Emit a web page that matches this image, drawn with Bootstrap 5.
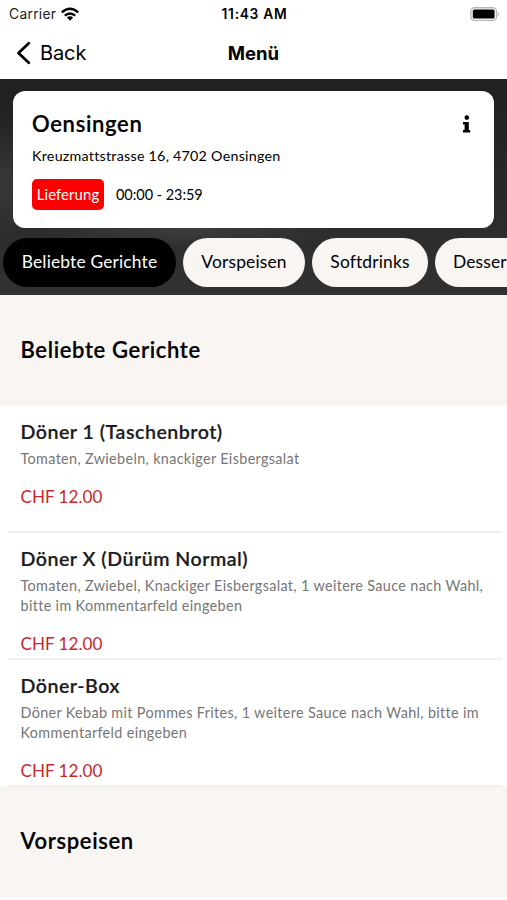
<!DOCTYPE html>
<html lang="de">
<head>
<meta charset="utf-8">
<meta name="viewport" content="width=device-width, initial-scale=1">
<title>Menü</title>
<link href="https://cdn.jsdelivr.net/npm/bootstrap@5.3.0/dist/css/bootstrap.min.css" rel="stylesheet">
<style>
body{font-family:Lato,"Liberation Sans",sans-serif;color:#000;height:900px;overflow:hidden;background:#fff}
.status,.topnav{font-family:Inter,"Liberation Sans",sans-serif;display:grid!important;grid-template-columns:1fr auto 1fr}
.status{height:27px;font-size:13.8px;padding:1px 7px 0 9px}
.carrier{letter-spacing:.3px;color:#222}
.clock{font-weight:600;font-size:13.8px;letter-spacing:.7px}
.topnav{height:52px;padding:0 16px}
.back{font-size:20px;letter-spacing:-.1px;gap:9px}
.screen-title{font-weight:700;font-size:18.5px;letter-spacing:0;padding-top:1px}
.hero{height:216px;padding:12px 0 9px 4px;background:
 radial-gradient(ellipse 40px 60px at 4px 100px,rgba(255,255,255,.07),transparent),
 radial-gradient(ellipse 150px 20px at 190px 150px,rgba(255,255,255,.08),transparent),
 linear-gradient(#202020,#292929 50%,#323232)}
.shop{border-radius:12px;margin:0 13px 10px 9px;height:137px;padding:19px 19px 0}
.shop-name{font-size:22px;font-weight:600;line-height:28px;letter-spacing:.68px;-webkit-text-stroke:.2px}
.address{font-size:14.3px;line-height:20px;margin-top:8px;letter-spacing:.24px}
.hours{font-size:14.5px;gap:12px;margin-top:13px;letter-spacing:-.05px}
.delivery{background:#f00;color:#fff;border-radius:5px;width:72px;height:31px;font-size:14.9px;letter-spacing:.1px;padding-bottom:1px}
.pills{gap:7px}
.pill{height:49px;border-radius:25px;background:#f8f5f2;font-size:17.4px;flex:none;letter-spacing:.16px}
.pill-on{background:#000;color:#fff}
.w1{width:173px;margin-left:-1px}.w2{width:122px}.w3{width:116px}.w4{width:110px;padding-left:18px}
.group-head{background:#f8f5f2;height:111px;padding:0 0 2px 20.5px;font-size:22px;font-weight:600;letter-spacing:.65px;-webkit-text-stroke:.2px}
.group-last{margin-top:-1px;height:111px}
.dish{height:127px;padding:13px 13px 0 12.5px;margin:0 5px 0 8px;border-bottom:2px solid #f0f0f0;position:relative}
.dish-name{font-size:19.6px;font-weight:600;line-height:26px;color:#1c1c1e;letter-spacing:.5px;-webkit-text-stroke:.2px}
.dish-text{font-size:14.4px;line-height:20px;color:#767676;margin-top:4px;letter-spacing:.34px;white-space:nowrap}
.price{font-size:17.1px;line-height:24px;color:#c8282c;margin-top:16px}
</style>
</head>
<body>
<header>
 <div class="status align-items-center">
  <div class="d-flex align-items-center gap-1"><span class="carrier">Carrier</span>
   <svg width="20" height="15" viewBox="0 0 20 15"><g fill="none" stroke="#000" stroke-width="2.4"><path d="M1.8 5.4Q10-1.8 18.2 5.4"/><path d="M4.8 8.7Q10 4.2 15.2 8.7"/></g><path d="M6.9 10.5Q10 8 13.1 10.5L10 13.8Z"/></svg></div>
  <div class="clock">11:43 AM</div>
  <svg class="ms-auto" width="31" height="15" viewBox="0 0 31 15"><rect x="1.8" y=".8" width="25.8" height="12.6" rx="4" fill="#fff" stroke="#b7b7b7" stroke-width="1.4"/><rect x="3.8" y="2.6" width="21.8" height="9" rx="1.6"/><path d="M28.9 4.8Q31.1 7.1 28.9 9.4Z" fill="#b7b7b7"/></svg>
 </div>
 <nav class="topnav align-items-center">
  <div class="back d-flex align-items-center"><svg width="15" height="24" viewBox="0 0 15 24"><path d="M12.8 2.2 2.5 12 12.8 21.8" fill="none" stroke="#000" stroke-width="2.8" stroke-linecap="round" stroke-linejoin="round"/></svg><span>Back</span></div>
  <div class="screen-title">Menü</div>
 </nav>
</header>
<section class="hero overflow-hidden">
 <div class="shop bg-white">
  <div class="d-flex justify-content-between"><div class="shop-name">Oensingen</div>
   <svg class="mt-1 me-1" width="10" height="20" viewBox="0 0 10 20"><circle cx="5.8" cy="3.6" r="2.3"/><path d="M2 8h5.8v8h1.4v2.6H2v-2.6h1.6v-5.4H2z"/></svg></div>
  <div class="address"><span>Kreuzmattstrasse 16, 4702 Oensingen</span></div>
  <div class="hours d-flex align-items-center"><span class="delivery d-flex align-items-center justify-content-center">Lieferung</span><span>00:00 - 23:59</span></div>
 </div>
 <div class="pills d-flex">
  <div class="pill pill-on w1 d-flex align-items-center justify-content-center">Beliebte Gerichte</div>
  <div class="pill w2 d-flex align-items-center justify-content-center">Vorspeisen</div>
  <div class="pill w3 d-flex align-items-center justify-content-center">Softdrinks</div>
  <div class="pill w4 d-flex align-items-center">Desserts</div>
 </div>
</section>
<main>
 <div class="group-head d-flex align-items-center">Beliebte Gerichte</div>
 <article class="dish"><div class="dish-name">Döner 1 (Taschenbrot)</div><div class="dish-text">Tomaten, Zwiebeln, knackiger Eisbergsalat</div><div class="price">CHF 12.00</div></article>
 <article class="dish"><div class="dish-name">Döner X (Dürüm Normal)</div><div class="dish-text">Tomaten, Zwiebel, Knackiger Eisbergsalat, 1 weitere Sauce nach Wahl,<br>bitte im Kommentarfeld eingeben</div><div class="price">CHF 12.00</div></article>
 <article class="dish"><div class="dish-name">Döner-Box</div><div class="dish-text">Döner Kebab mit Pommes Frites, 1 weitere Sauce nach Wahl, bitte im<br>Kommentarfeld eingeben</div><div class="price">CHF 12.00</div></article>
 <div class="group-head group-last d-flex align-items-center">Vorspeisen</div>
</main>
<script src="https://cdn.jsdelivr.net/npm/bootstrap@5.3.0/dist/js/bootstrap.bundle.min.js"></script>
</body>
</html>
